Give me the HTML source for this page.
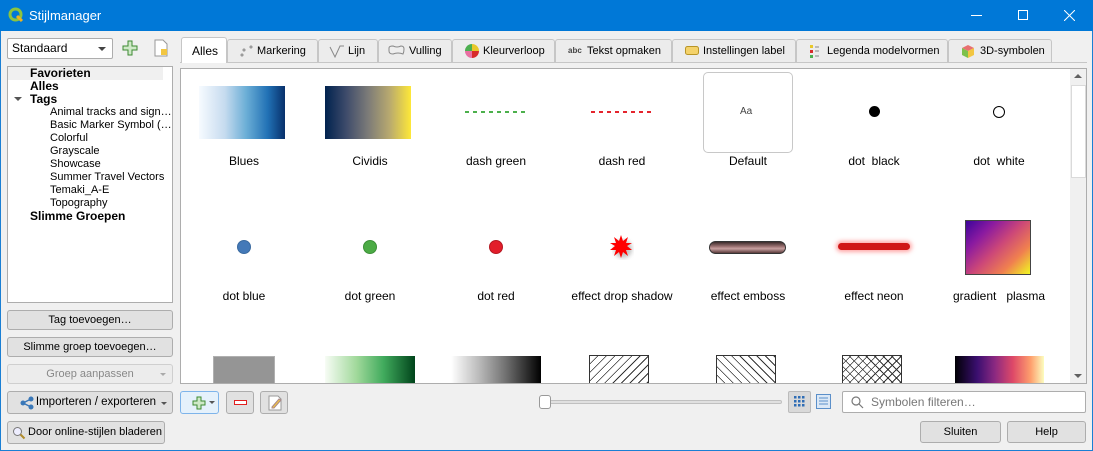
<!DOCTYPE html>
<html><head><meta charset="utf-8"><style>
*{box-sizing:border-box;margin:0;padding:0}
body{width:1093px;height:451px;overflow:hidden;background:#f0f0f0;font-family:"Liberation Sans",sans-serif;font-size:12px;color:#000;position:relative;white-space:nowrap}
.a{position:absolute}
.win{position:absolute;left:0;top:0;width:1093px;height:451px;border:1px solid #1a7fd4;border-top:none}
.title{position:absolute;left:0;top:0;width:1093px;height:31px;background:#0078d7;color:#fff}
.btn{position:absolute;background:#e1e1e1;border:1px solid #adadad;border-radius:3px;text-align:center;line-height:18px;white-space:nowrap}
.tab{position:absolute;top:39px;height:23px;background:#ececec;border:1px solid #c6c6c6;border-bottom:none;border-radius:3px 3px 0 0;line-height:22px;font-size:11px;padding-left:10px;white-space:nowrap;overflow:hidden}
.lbl{position:absolute;width:126px;text-align:center;font-size:12px}
.tree div{position:absolute;line-height:13px;white-space:nowrap}
</style></head><body>
<div class="title">
<svg class="a" style="left:8px;top:7px" width="16" height="16" viewBox="0 0 16 16"><circle cx="7.5" cy="7.5" r="5.5" fill="none" stroke="#8cc43f" stroke-width="3"/><path d="M9 9l5 5" stroke="#f0b31d" stroke-width="3"/></svg>
<div class="a" style="left:29px;top:8px;font-size:13px">Stijlmanager</div>
<div class="a" style="left:971px;top:15px;width:11px;height:1px;background:#fff"></div>
<div class="a" style="left:1018px;top:10px;width:10px;height:10px;border:1px solid #fff"></div>
<svg class="a" style="left:1064px;top:10px" width="11" height="11"><path d="M0 0L11 11M11 0L0 11" stroke="#fff" stroke-width="1"/></svg>
</div>
<div class="win" style="top:31px;height:420px"></div>

<div class="a" style="left:7px;top:38px;width:106px;height:21px;background:#fff;border:1px solid #adadad;border-radius:2px;padding-left:4px;line-height:19px">Standaard<span class="a" style="right:6px;top:8px;border:4px solid transparent;border-top:4px solid #444"></span></div>
<svg class="a" style="left:122px;top:40px" width="16" height="16"><path d="M6 1h4v5h5v4h-5v5h-4v-5h-5v-4h5z" fill="#cfe9c8" stroke="#3d8a32"/></svg>
<svg class="a" style="left:153px;top:39px" width="16" height="18"><path d="M2 1h8l4 4v12h-12z" fill="#fff" stroke="#999"/><rect x="8" y="10" width="6" height="6" fill="#f2c641"/></svg>
<div class="a" style="left:7px;top:66px;width:166px;height:237px;background:#fff;border:1px solid #adadad"></div>
<div class="a" style="left:8px;top:67px;width:155px;height:13px;background:#f0f0f0"></div>
<div class="a" style="left:163px;top:67px;width:9px;height:235px;background:#fff"></div>
<div class="tree">
<div style="left:30px;top:67px;font-weight:bold">Favorieten</div>
<div style="left:30px;top:80px;font-weight:bold">Alles</div>
<div style="left:14px;top:97px;border:4px solid transparent;border-top:4px solid #555;line-height:0"></div>
<div style="left:30px;top:93px;font-weight:bold">Tags</div>
<div style="left:50px;top:106px;font-size:11px">Animal tracks and sign…</div>
<div style="left:50px;top:119px;font-size:11px">Basic Marker Symbol (…</div>
<div style="left:50px;top:132px;font-size:11px">Colorful</div>
<div style="left:50px;top:145px;font-size:11px">Grayscale</div>
<div style="left:50px;top:158px;font-size:11px">Showcase</div>
<div style="left:50px;top:171px;font-size:11px">Summer Travel Vectors</div>
<div style="left:50px;top:184px;font-size:11px">Temaki_A-E</div>
<div style="left:50px;top:197px;font-size:11px">Topography</div>
<div style="left:30px;top:210px;font-weight:bold">Slimme Groepen</div>
</div>
<div class="btn" style="left:7px;top:310px;width:166px;height:20px;font-size:11px">Tag toevoegen…</div>
<div class="btn" style="left:7px;top:337px;width:166px;height:20px;font-size:11px">Slimme groep toevoegen…</div>
<div class="btn" style="left:7px;top:364px;width:166px;height:20px;font-size:11px;color:#888;background:#ececec;border-color:#cfcfcf">Groep aanpassen<span class="a" style="right:6px;top:8px;border:3px solid transparent;border-top:3px solid #aaa"></span></div>
<div class="btn" style="left:7px;top:391px;width:166px;height:23px;line-height:21px;font-size:11.5px;padding-left:12px">
<svg class="a" style="left:12px;top:4px" width="14" height="14"><circle cx="3" cy="7" r="2.5" fill="#3b78b8"/><circle cx="11" cy="3" r="2.5" fill="#3b78b8"/><circle cx="11" cy="11" r="2.5" fill="#3b78b8"/><path d="M3 7L11 3M3 7L11 11" stroke="#3b78b8" stroke-width="1.5"/></svg>Importeren / exporteren<span class="a" style="right:5px;top:10px;border:3px solid transparent;border-top:3px solid #555"></span></div>
<div class="btn" style="left:7px;top:421px;width:158px;height:23px;line-height:21px;font-size:11px;padding-left:18px">
<svg class="a" style="left:4px;top:4px" width="14" height="14"><circle cx="5.5" cy="5.5" r="4" fill="#eef" stroke="#777"/><path d="M8.5 8.5l4 4" stroke="#b08b2c" stroke-width="2"/></svg>Door online-stijlen bladeren</div>

<div class="a" style="left:180px;top:62px;width:907px;height:1px;background:#c6c6c6"></div>
<div class="tab" style="left:227px;width:91px;padding-left:29px">Markering<svg class="a" style="left:12px;top:4px" width="14" height="14"><circle cx="2" cy="11" r="1" fill="none" stroke="#888"/><circle cx="4" cy="6" r="1" fill="none" stroke="#888"/><circle cx="11" cy="3" r="1" fill="none" stroke="#888"/></svg></div>
<div class="tab" style="left:318px;width:60px;padding-left:29px">Lijn<svg class="a" style="left:9px;top:3px" width="20" height="16"><path d="M2 4l5 10 5-11 4 0" fill="none" stroke="#888"/></svg></div>
<div class="tab" style="left:378px;width:74px;padding-left:30px">Vulling<svg class="a" style="left:9px;top:5px" width="18" height="12"><path d="M1 3q0-2 4-2 4 2 8 0 3 0 3 3t-1 5q-5 -2-10 0-4 0-4-3z" fill="#eee" stroke="#888"/></svg></div>
<div class="tab" style="left:452px;width:103px;padding-left:30px">Kleurverloop<svg class="a" style="left:12px;top:4px" width="14" height="14" viewBox="0 0 14 14"><path d="M7 7L7 0A7 7 0 0 1 14 7z" fill="#e8c82a"/><path d="M7 7L14 7A7 7 0 0 1 7 14z" fill="#d72b2b"/><path d="M7 7L7 14A7 7 0 0 1 0 7z" fill="#e86fa2"/><path d="M7 7L0 7A7 7 0 0 1 7 0z" fill="#4caf50"/></svg></div>
<div class="tab" style="left:555px;width:117px;padding-left:31px">Tekst opmaken<span class="a" style="left:12px;top:0;font-size:8px;font-weight:bold;color:#444">abc</span></div>
<div class="tab" style="left:672px;width:124px;padding-left:30px">Instellingen label<svg class="a" style="left:12px;top:6px" width="14" height="9"><rect x="0.5" y="0.5" width="13" height="8" rx="2" fill="#f4d26a" stroke="#b89526"/></svg></div>
<div class="tab" style="left:796px;width:152px;padding-left:30px">Legenda modelvormen<svg class="a" style="left:13px;top:5px" width="10" height="13"><rect x="0" y="0" width="3" height="3" fill="#e8c82a"/><rect x="0" y="5" width="3" height="3" fill="#d72b2b"/><rect x="0" y="10" width="3" height="3" fill="#4caf50"/><path d="M5 2h4M5 6h4M5 11h4" stroke="#888"/></svg></div>
<div class="tab" style="left:948px;width:104px;padding-left:31px">3D-symbolen<svg class="a" style="left:12px;top:4px" width="14" height="15"><path d="M7 1l6 3-6 3-6-3z" fill="#e87070"/><path d="M1 4l6 3v7l-6-3z" fill="#7cc14a"/><path d="M13 4l-6 3v7l6-3z" fill="#f2c641"/></svg></div>
<div class="tab" style="left:181px;top:37px;width:46px;height:26px;background:#fff;border-color:#c6c6c6;line-height:27px;font-size:12px">Alles</div>

<div class="a" style="left:180px;top:68px;width:907px;height:316px;background:#fff;border:1px solid #adadad;overflow:hidden">
<div class="a" style="left:889px;top:0;width:17px;height:314px;background:#f0f0f0"></div>
<div class="a" style="left:893px;top:5px;border:4px solid transparent;border-bottom:4px solid #606060;border-top:none"></div>
<div class="a" style="left:893px;top:305px;border:4px solid transparent;border-top:4px solid #606060;border-bottom:none"></div>
<div class="a" style="left:890px;top:16px;width:15px;height:93px;background:#fff;border:1px solid #dadada"></div>
</div>
<div class="a" style="left:0;top:0">
<div class="a" style="left:199px;top:86px;width:86px;height:53px;background:linear-gradient(90deg,#f7fbff,#c6dbef 30%,#6baed6 55%,#2171b5 80%,#08306b)"></div>
<div class="a" style="left:325px;top:86px;width:86px;height:53px;background:linear-gradient(90deg,#00224e,#3f4c6b 25%,#7c7b78 50%,#b8a96f 75%,#fee838)"></div>
<div class="a" style="left:465px;top:111px;width:62px;height:2px;background:repeating-linear-gradient(90deg,#4cb04c 0 4px,transparent 4px 8px)"></div>
<div class="a" style="left:591px;top:111px;width:62px;height:2px;background:repeating-linear-gradient(90deg,#e4242d 0 4px,transparent 4px 8px)"></div>
<div class="a" style="left:703px;top:72px;width:90px;height:81px;border:1px solid #c8c8c8;border-radius:5px;background:#fff"></div>
<div class="a" style="left:740px;top:106px;font-size:10px;color:#444">Aa</div>
<div class="a" style="left:869px;top:106px;width:11px;height:11px;border-radius:50%;background:#000"></div>
<div class="a" style="left:993px;top:106px;width:12px;height:12px;border-radius:50%;border:1.5px solid #000;background:#fff"></div>
<div class="lbl" style="left:181px;top:154px">Blues</div>
<div class="lbl" style="left:307px;top:154px">Cividis</div>
<div class="lbl" style="left:433px;top:154px">dash green</div>
<div class="lbl" style="left:559px;top:154px">dash red</div>
<div class="lbl" style="left:685px;top:154px">Default</div>
<div class="lbl" style="left:811px;top:154px">dot &nbsp;black</div>
<div class="lbl" style="left:936px;top:154px">dot &nbsp;white</div>
<div class="a" style="left:237px;top:240px;width:14px;height:14px;border-radius:50%;background:#4479b8;border:1px solid #3a6aa0"></div>
<div class="a" style="left:363px;top:240px;width:14px;height:14px;border-radius:50%;background:#4cab45;border:1px solid #3d9038"></div>
<div class="a" style="left:489px;top:240px;width:14px;height:14px;border-radius:50%;background:#e21d2a;border:1px solid #b51822"></div>
<svg class="a" style="left:606px;top:232px" width="30" height="30" viewBox="0 0 30 30"><defs><filter id="f"><feGaussianBlur stdDeviation="2"/></filter></defs><circle cx="17" cy="17" r="9" fill="#888" opacity=".5" filter="url(#f)"/><path d="M15 3l2 6 5-4-2 6 6 0-5 3 5 4-6 0 2 6-5-4-2 6-2-6-5 4 2-6-6 0 5-4-5-3 6 0-2-6 5 4z" fill="#f00"/></svg>
<div class="a" style="left:709px;top:241px;width:77px;height:13px;border-radius:7px;background:linear-gradient(180deg,#3a2a2a,#9a7070 40%,#c8a0a0 60%,#5a3a3a);border:1px solid #333"></div>
<div class="a" style="left:838px;top:243px;width:72px;height:7px;border-radius:4px;background:#d01818;box-shadow:0 0 4px 2px rgba(255,80,80,.5)"></div>
<div class="a" style="left:965px;top:220px;width:66px;height:55px;border:1px solid #444;background:linear-gradient(135deg,#3d049b,#8a1aa0 25%,#cc4778 50%,#f0804f 75%,#f0f921)"></div>
<div class="lbl" style="left:181px;top:289px">dot blue</div>
<div class="lbl" style="left:307px;top:289px">dot green</div>
<div class="lbl" style="left:433px;top:289px">dot red</div>
<div class="lbl" style="left:559px;top:289px">effect drop shadow</div>
<div class="lbl" style="left:685px;top:289px">effect emboss</div>
<div class="lbl" style="left:811px;top:289px">effect neon</div>
<div class="lbl" style="left:936px;top:289px">gradient &nbsp;&nbsp;plasma</div>
<div class="a" style="left:213px;top:356px;width:62px;height:27px;background:#959595;border:1px solid #b0b0b0;border-bottom:none"></div>
<div class="a" style="left:325px;top:356px;width:90px;height:27px;background:linear-gradient(90deg,#f7fcf5,#a1d99b 35%,#41ab5d 65%,#00441b)"></div>
<div class="a" style="left:451px;top:356px;width:90px;height:27px;background:linear-gradient(90deg,#fff,#bdbdbd 30%,#737373 60%,#000)"></div>
<div class="a" style="left:589px;top:355px;width:60px;height:28px;border:1.5px solid #333;border-bottom:none;background:repeating-linear-gradient(135deg,#fff 0 5px,#333 5px 6px)"></div>
<div class="a" style="left:716px;top:355px;width:60px;height:28px;border:1.5px solid #333;border-bottom:none;background:repeating-linear-gradient(45deg,#fff 0 5px,#333 5px 6px)"></div>
<div class="a" style="left:842px;top:355px;width:60px;height:28px;border:1.5px solid #333;border-bottom:none;background:repeating-linear-gradient(45deg,transparent 0 5px,#333 5px 6px),repeating-linear-gradient(135deg,#fff 0 5px,#333 5px 6px)"></div>
<div class="a" style="left:955px;top:356px;width:89px;height:27px;background:linear-gradient(90deg,#000004,#3b0f70 25%,#8c2981 45%,#de4968 65%,#fe9f6d 85%,#fcfdbf)"></div>
</div>

<div class="btn" style="left:180px;top:391px;width:39px;height:23px;background:#e5f1fb;border-color:#7eb4ea"><svg class="a" style="left:11px;top:4px" width="14" height="14"><path d="M5 1h4v4h4v4h-4v4h-4v-4h-4v-4h4z" fill="#cfe9c8" stroke="#3d8a32"/></svg><span class="a" style="left:28px;top:9px;border:3px solid transparent;border-top:3px solid #555"></span></div>
<div class="btn" style="left:226px;top:391px;width:28px;height:23px"><div class="a" style="left:7px;top:8px;width:13px;height:5px;border:1.5px solid #e02020;background:#fff"></div></div>
<div class="btn" style="left:260px;top:391px;width:28px;height:23px"><svg class="a" style="left:7px;top:3px" width="14" height="16"><path d="M1 1h9l3 3v11h-12z" fill="#fff" stroke="#999"/><path d="M4 12l7-8 2 1-7 8-2 0z" fill="#f2c641" stroke="#a88"/></svg></div>
<div class="a" style="left:540px;top:400px;width:242px;height:4px;background:#e0e0e0;border:1px solid #c0c0c0;border-radius:2px"></div>
<div class="a" style="left:539px;top:395px;width:12px;height:14px;background:#fff;border:1px solid #999;border-radius:3px"></div>
<div class="a" style="left:788px;top:391px;width:23px;height:22px;background:#d9d9d9;border:1px solid #bbb;border-radius:2px"></div>
<svg class="a" style="left:793px;top:395px" width="13" height="13"><g fill="#2f6db5"><rect x="1" y="1" width="2.5" height="2.5"/><rect x="5" y="1" width="2.5" height="2.5"/><rect x="9" y="1" width="2.5" height="2.5"/><rect x="1" y="5" width="2.5" height="2.5"/><rect x="5" y="5" width="2.5" height="2.5"/><rect x="9" y="5" width="2.5" height="2.5"/><rect x="1" y="9" width="2.5" height="2.5"/><rect x="5" y="9" width="2.5" height="2.5"/><rect x="9" y="9" width="2.5" height="2.5"/></g></svg>
<svg class="a" style="left:816px;top:394px" width="15" height="15"><rect x="0.5" y="0.5" width="14" height="14" fill="#dbe8f6" stroke="#5b8fc9"/><path d="M3 4h9M3 7h9M3 10h9" stroke="#5b8fc9"/></svg>
<div class="a" style="left:842px;top:391px;width:244px;height:22px;background:#fff;border:1px solid #adadad;border-radius:2px;color:#777;padding-left:28px;line-height:20px">Symbolen filteren…<svg class="a" style="left:8px;top:4px" width="13" height="13"><circle cx="5" cy="5" r="4" fill="none" stroke="#777" stroke-width="1.2"/><path d="M8 8l4 4" stroke="#777" stroke-width="1.2"/></svg></div>
<div class="btn" style="left:920px;top:421px;width:81px;height:22px;line-height:20px;font-size:11px">Sluiten</div>
<div class="btn" style="left:1007px;top:421px;width:79px;height:22px;line-height:20px;font-size:11px">Help</div>
</body></html>
